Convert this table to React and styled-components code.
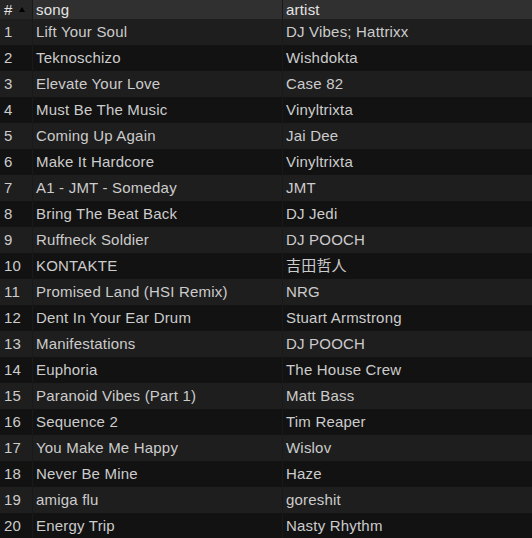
import React from "react";
import styled, { createGlobalStyle } from "styled-components";

const tracks = [
  ["Lift Your Soul", "DJ Vibes; Hattrixx"],
  ["Teknoschizo", "Wishdokta"],
  ["Elevate Your Love", "Case 82"],
  ["Must Be The Music", "Vinyltrixta"],
  ["Coming Up Again", "Jai Dee"],
  ["Make It Hardcore", "Vinyltrixta"],
  ["A1 - JMT - Someday", "JMT"],
  ["Bring The Beat Back", "DJ Jedi"],
  ["Ruffneck Soldier", "DJ POOCH"],
  ["KONTAKTE", "吉田哲人"],
  ["Promised Land (HSI Remix)", "NRG"],
  ["Dent In Your Ear Drum", "Stuart Armstrong"],
  ["Manifestations", "DJ POOCH"],
  ["Euphoria", "The House Crew"],
  ["Paranoid Vibes (Part 1)", "Matt Bass"],
  ["Sequence 2", "Tim Reaper"],
  ["You Make Me Happy", "Wislov"],
  ["Never Be Mine", "Haze"],
  ["amiga flu", "goreshit"],
  ["Energy Trip", "Nasty Rhythm"],
];

const Global = createGlobalStyle`
  body {
    margin: 0;
    background: #121212;
    font-family: "Liberation Sans", Arial, "Noto Sans CJK JP", sans-serif;
  }
`;

const Table = styled.div`
  width: 532px;
  display: flex;
  flex-direction: column;
`;

const Row = styled.div`
  display: grid;
  grid-template-columns: 33px 250px 1fr;
  height: ${(p) => (p.head ? "19px" : "26px")};
  line-height: ${(p) => (p.head ? "20px" : "26px")};
  background: ${(p) => (p.head ? "#303030" : p.odd ? "#1e1e1e" : "#121212")};
  color: ${(p) => (p.head ? "#e4e4e4" : "#cccccc")};
  font-size: 15px;
  letter-spacing: 0.2px;
`;

const Cell = styled.div`
  box-sizing: border-box;
  padding-left: ${(p) => (p.num ? "4px" : "3px")};
  border-right: ${(p) => (p.last ? "none" : "1px solid #191919")};
  white-space: nowrap;
  overflow: hidden;
  display: flex;
  align-items: center;
  gap: 6px;
  background: ${(p) => (p.sorted ? "#262626" : "transparent")};
`;

const Arrow = styled.span`
  width: 0;
  height: 0;
  border-left: 3px solid transparent;
  border-right: 3px solid transparent;
  border-bottom: 5px solid #000;
  margin-top: -1px;
`;

export default function App() {
  return (
    <>
      <Global />
      <Table>
        <Row head>
          <Cell num sorted>
            #<Arrow />
          </Cell>
          <Cell>song</Cell>
          <Cell last>artist</Cell>
        </Row>
        {tracks.map(([song, artist], i) => (
          <Row key={i} odd={i % 2 === 0}>
            <Cell num>{i + 1}</Cell>
            <Cell>{song}</Cell>
            <Cell last>{artist}</Cell>
          </Row>
        ))}
      </Table>
    </>
  );
}
